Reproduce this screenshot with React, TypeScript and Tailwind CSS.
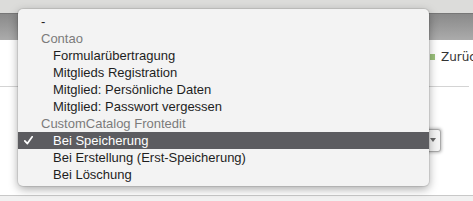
const groups = [
  { label: "-", items: [] as string[], dash: true },
  {
    label: "Contao",
    items: [
      "Formularübertragung",
      "Mitglieds Registration",
      "Mitglied: Persönliche Daten",
      "Mitglied: Passwort vergessen",
    ],
  },
  {
    label: "CustomCatalog Frontedit",
    items: ["Bei Speicherung", "Bei Erstellung (Erst-Speicherung)", "Bei Löschung"],
  },
];

const selected = "Bei Speicherung";

function Menu() {
  return (
    <div className="absolute left-[18px] top-[9px] w-[411px] h-[177px] rounded-[5px] bg-[#f3f3f3] pt-[4px] shadow-[0_3px_10px_rgba(0,0,0,0.35),0_0_0_1px_rgba(0,0,0,0.08)] font-['Liberation_Sans',Arial,sans-serif] text-[13px]">
      {groups.map((g) => (
        <div key={g.label}>
          <div
            className={
              "h-[17px] leading-[17px] pl-[23px] " +
              (g.dash ? "text-[#222]" : "text-[#7b7b7b]")
            }
          >
            {g.label}
          </div>
          {g.items.map((it) => {
            const active = it === selected;
            return (
              <div
                key={it}
                className={
                  "relative h-[17px] leading-[17px] pl-[35px] " +
                  (active ? "bg-[#5c5c60] text-white" : "text-[#1e1e1e]")
                }
              >
                {active && (
                  <svg
                    className="absolute left-[6px] top-[4px]"
                    width="9"
                    height="9"
                    viewBox="0 0 9 9"
                  >
                    <path
                      d="M0.8 4.8 L3.4 7.6 L8.2 0.8"
                      fill="none"
                      stroke="white"
                      strokeWidth="1.7"
                      strokeLinecap="round"
                      strokeLinejoin="round"
                    />
                  </svg>
                )}
                {it}
              </div>
            );
          })}
        </div>
      ))}
    </div>
  );
}

export default function App() {
  return (
    <div className="relative w-[473px] h-[201px] overflow-hidden bg-white">
      {/* header strips */}
      <div className="h-[13px] bg-[#dcdcda]" />
      <div className="h-[27px] border-t border-[#777] bg-gradient-to-b from-[#8a8a8a] to-[#ababab]" />

      {/* content */}
      <div className="flex pl-[430px] pt-[10px]">
        <div className="flex items-center gap-[6px] h-[13px] whitespace-nowrap font-['DejaVu_Sans',Verdana,sans-serif] text-[12px] text-[#333]">
          <span className="shrink-0 w-[5px] h-[6px] bg-[#9cc27c]" />
          <span>Zurück</span>
        </div>
      </div>
      <div className="mt-[23px] mr-[4px] h-px bg-[#d4d4d4]" />

      <div className="flex justify-end pr-[32px] mt-[42px]">
        <div className="relative w-[320px] h-[23px] rounded-[3px] border border-[#a9a9a9] bg-[#f4f4f4] shadow-[0_0_3px_1px_rgba(0,0,0,0.25)]">
          <span className="absolute right-[4px] top-[8px] w-0 h-0 border-l-[3px] border-r-[3px] border-t-[4px] border-l-transparent border-r-transparent border-t-[#666]" />
        </div>
      </div>

      <div className="mt-[43px] h-px bg-[#c8c8c8]" />
      <div className="h-[10px] bg-[#f1f1f1]" />

      <Menu />
    </div>
  );
}
